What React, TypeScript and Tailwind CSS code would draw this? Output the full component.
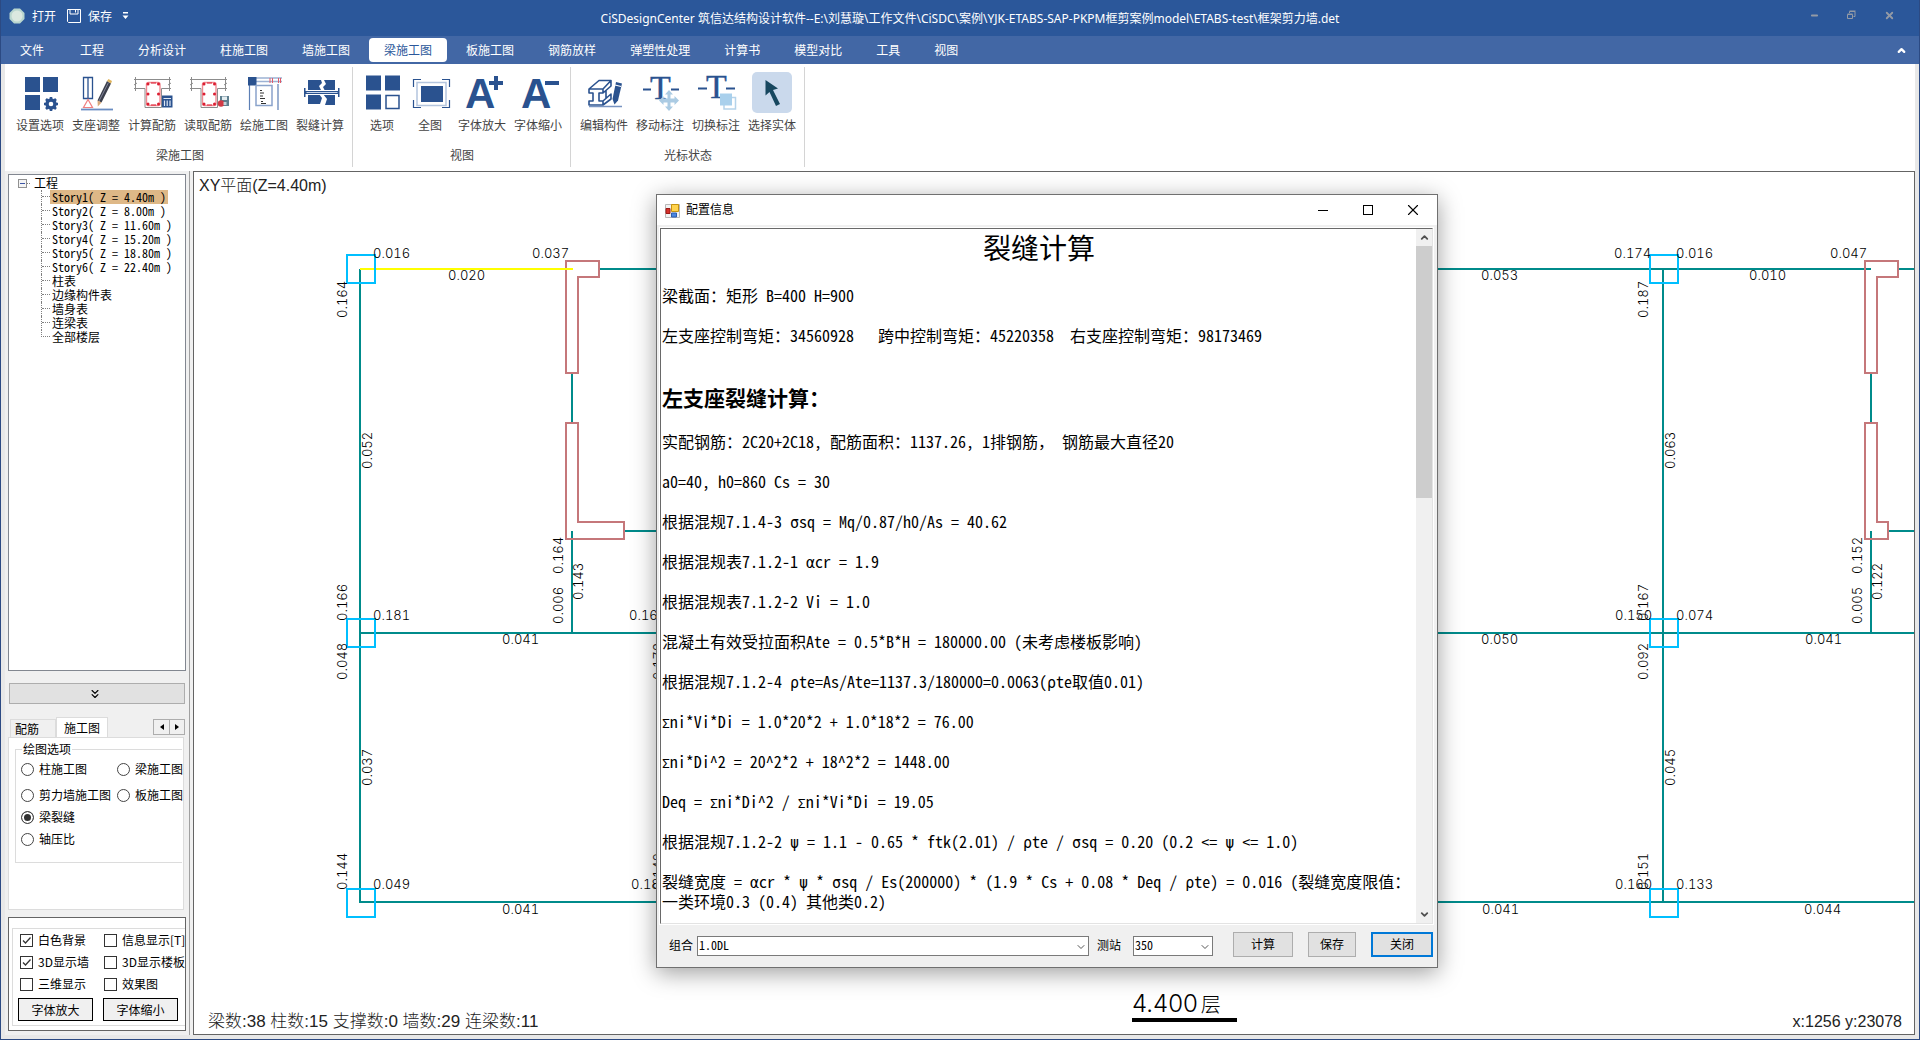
import React from 'react'
import { ChevronDown, ChevronsDown, ChevronUp, Minus, X } from 'lucide-react'

const menus = ['文件', '工程', '分析设计', '柱施工图', '墙施工图', '梁施工图', '板施工图', '钢筋放样', '弹塑性处理', '计算书', '模型对比', '工具', '视图']

const stories = ['Story1( Z = 4.40m )', 'Story2( Z = 8.00m )', 'Story3( Z = 11.60m )', 'Story4( Z = 15.20m )', 'Story5( Z = 18.80m )', 'Story6( Z = 22.40m )', '柱表', '边缘构件表', '墙身表', '连梁表', '全部楼层']

const BLUE = '#2a528f'

function Icon({ children }: { children: React.ReactNode }) {
  return (
    <svg width="40" height="40" viewBox="0 0 40 40" fill="none" aria-hidden="true" className="overflow-visible">
      {children}
    </svg>
  )
}

function SettingsIcon() {
  return (
    <Icon>
      <path d="M5 5h15v15H5zM23 5h15v15H23zM5 23h15v15H5z" fill={BLUE} />
      <circle cx="31" cy="32" r="4" stroke={BLUE} strokeWidth="3.4" />
      <path d="M31 25v3M31 36v3M24 32h3M35 32h3M26 27l2 2M34 35l2 2M36 27l-2 2M28 35l-2 2" stroke={BLUE} strokeWidth="2.6" />
    </Icon>
  )
}

function SupportIcon() {
  return (
    <Icon>
      <path d="M7.500 5.500h9v21h-9zM12 5.500v21" stroke={BLUE} strokeWidth="1.300" />
      <path d="M12 27.500l-4.500 8h9z" stroke="#f08080" strokeWidth="1.200" />
      <path d="M5 37.500h32" stroke="#6a8dc2" strokeWidth="1.800" />
      <path d="M31 9l4 2.500-9.500 19-4-2z" fill="#3b3f4c" />
      <path d="M32.500 10.500l-9.500 18.500" stroke="#80849a" strokeWidth="1" />
      <path d="M31 9l1.500-2 3.500 2-1 2.500z" fill="#e0b45c" />
      <path d="M21.500 28.500l4 2-3.700 4z" fill="#d9a878" />
    </Icon>
  )
}

function SectionBase() {
  return (
    <>
      <path d="M2 7.500h37M2 16.500h11v19h16.500v-19H39M3.500 5v14M37.500 5v14" stroke="#8c8c8c" strokeWidth="1" />
      <path d="M2 13l3-2M36 13l3-2" stroke="#8c8c8c" strokeWidth="1" />
      <rect x="14.500" y="10.500" width="13.500" height="23" rx="2" stroke="#f08a92" strokeWidth="1.400" />
      {[12, 22, 32].map((y) => (
        <React.Fragment key={y}>
          <circle cx="16" cy={y} r="1.500" fill="#dc1e32" />
          <circle cx="26.500" cy={y} r="1.500" fill="#dc1e32" />
        </React.Fragment>
      ))}
      <path d="M19 11h5M19 33h5" stroke="#dc1e32" strokeWidth="1" />
    </>
  )
}

function CalcRebarIcon() {
  return (
    <Icon>
      <SectionBase />
      <path d="M30 23.500h10.500v12H30z" fill={BLUE} />
      <path d="M31.500 26.500h7.500M32.500 28.500v5.500M35.200 28.500v5.500M38 28.500v5.500" stroke="#dfe8f5" strokeWidth="1.200" />
    </Icon>
  )
}

function ReadRebarIcon() {
  return (
    <Icon>
      <SectionBase />
      <path d="M32 24h9v10h-9z" fill="#5f7f8f" />
      <path d="M34 24.500h5v3.500h-5z" fill="#e4edf0" />
      <circle cx="33" cy="31.500" r="3.200" fill="#d23a45" />
      <path d="M35.500 30h3v3h-3z" fill="#c8d4da" />
    </Icon>
  )
}

function DrawPlanIcon() {
  return (
    <Icon>
      <path d="M12 6h26M12 9.500h26" stroke="#9db2d4" strokeWidth="1.400" />
      <path d="M5.500 12v26M34 12v26" stroke="#5d7fb5" strokeWidth="1.200" />
      <path d="M4 5h8.500v8.500H4z" fill={BLUE} />
      <path d="M26 6v5M28.500 6v5M36.500 6v5M34.500 6v5" stroke="#dd5a6a" strokeWidth="1" />
      <path d="M12 13.500h16v20H12z" stroke="#8aa3cb" strokeWidth="1.500" fill="#fff" />
      <path d="M16 18.500h2M16 21h4M16 24h3M16 26.500h5M17 29.500h2M17 31.500h5" stroke="#333" strokeWidth="1" />
    </Icon>
  )
}

function CrackIcon() {
  return (
    <Icon>
      <path d="M8 8h13l1 3-3 3 2 4-2 4 3 4-2 6H8zM35 8H24l2 4-3 3 2 4-2 3 4 5-2 6h10z" fill={BLUE} />
      <path d="M5 18h34v5H5z" fill="#fff" />
      <path d="M5 19h34v3H5zM4 16h1.500v9H4zM38 16h1.500v9H38z" fill={BLUE} />
      <path d="M6.500 20.500h31" stroke="#c9d7ec" strokeWidth="1" />
    </Icon>
  )
}

function OptionIcon() {
  return (
    <Icon>
      <path d="M4 3.500h15v15H4zM23 3.500h15v15H23zM4 22.500h15v15H4z" fill={BLUE} />
      <path d="M24 23.500h13v13H24z" stroke={BLUE} strokeWidth="1.500" />
    </Icon>
  )
}

function FullViewIcon() {
  return (
    <Icon>
      <path d="M3.500 15V7.500H11M32 7.500h7.500V15M39.500 28v7.500H32M11 35.500H3.500V28" stroke={BLUE} strokeWidth="1.200" />
      <path d="M7 10.500h29v23H7z" stroke="#b4c5de" strokeWidth="1.500" />
      <path d="M11 14h22v16H11z" fill={BLUE} />
    </Icon>
  )
}

function FontIcon({ plus }: { plus?: boolean }) {
  return (
    <Icon>
      <text x="3" y="36" fontSize="42" fontWeight="700" fill={BLUE} fontFamily="Liberation Sans, sans-serif">A</text>
      <path d={plus ? 'M27 9h5V4h4v5h5v4h-5v5h-4v-5h-5z' : 'M27 9h14v4H27z'} fill={BLUE} />
    </Icon>
  )
}

function EditMemberIcon() {
  return (
    <Icon>
      <path d="M5 17h14v4h-4v8h4v4H5v-4h4v-8H5zM5 17L15 8.500h12L19 17M19 21l8-7V8.500M19 29l8-7v5l-8 6M15 29l0-8M22 18.500v8" stroke={BLUE} strokeWidth="1.600" strokeLinejoin="round" />
      <path d="M5 34.500h33" stroke="#7894c1" strokeWidth="1.600" />
      <path d="M32 10l6 1.500-4 17-3.500 4-2-5.500z" fill={BLUE} />
      <path d="M31 13l6 1.500" stroke="#fff" strokeWidth="1.200" />
    </Icon>
  )
}

function MoveLabelIcon() {
  return (
    <Icon>
      <text x="10" y="27" fontSize="34" fill={BLUE} stroke={BLUE} strokeWidth=".4" fontFamily="Liberation Serif, serif">T</text>
      <path d="M3 17.500h8M31 17.500h8" stroke={BLUE} strokeWidth="2" />
      <path d="M29 18l4 4.500h-2.500v4h4V24l4.500 4.500-4.500 4.500v-2.500h-4v4H33L29 39l-4-4.500h2.500v-4h-4V33L19 28.500l4.500-4.500v2.500h4v-4H25z" fill="#abcbe3" />
    </Icon>
  )
}

function SwitchLabelIcon() {
  return (
    <Icon>
      <text x="10" y="26" fontSize="34" fill={BLUE} stroke={BLUE} strokeWidth=".4" fontFamily="Liberation Serif, serif">T</text>
      <path d="M2 16.500h9M30 16.500h9" stroke={BLUE} strokeWidth="2" />
      <path d="M28 25.500h11.500v11.500H28z" fill="#fff" stroke="#b5d3ea" strokeWidth="1.500" />
      <path d="M24 21.500h12v12H24z" fill="#a9d0ec" />
    </Icon>
  )
}

function SelectIcon() {
  return (
    <Icon>
      <path d="M13.500 8L26 16.500l-5 1.500 7 14-4 2-6.500-14-4 3.500z" fill="#17475f" />
    </Icon>
  )
}

const ribbon = [
  {
    title: '梁施工图',
    pad: 'pl-[7px]',
    items: [
      { label: '设置选项', icon: <SettingsIcon /> },
      { label: '支座调整', icon: <SupportIcon /> },
      { label: '计算配筋', icon: <CalcRebarIcon /> },
      { label: '读取配筋', icon: <ReadRebarIcon /> },
      { label: '绘施工图', icon: <DrawPlanIcon /> },
      { label: '裂缝计算', icon: <CrackIcon /> },
    ],
  },
  {
    title: '视图',
    pad: 'pl-[5px]',
    items: [
      { label: '选项', icon: <OptionIcon /> },
      { label: '全图', icon: <FullViewIcon /> },
      { label: '字体放大', icon: <FontIcon plus /> },
      { label: '字体缩小', icon: <FontIcon /> },
    ],
  },
  {
    title: '光标状态',
    pad: 'pl-[5px]',
    items: [
      { label: '编辑构件', icon: <EditMemberIcon /> },
      { label: '移动标注', icon: <MoveLabelIcon /> },
      { label: '切换标注', icon: <SwitchLabelIcon /> },
      { label: '选择实体', icon: <SelectIcon />, active: true },
    ],
  },
]

function Header() {
  return (
    <header className="shrink-0 text-xs text-white">
      <div className="grid h-9 grid-cols-[1fr_auto_1fr] bg-[#2b579a]">
        <div className="flex h-8 items-center pl-2">
          <button className="flex items-center gap-[7px]">
            <svg width="16" height="16" viewBox="0 0 16 16" aria-hidden="true">
              <path d="M5 .500h6l4.500 4.500v6L11 15.500H5L.500 11V5z" fill="#b9d6cf" />
              <circle cx="8" cy="8" r="5.500" fill="#dbe8e0" />
            </svg>
            打开
          </button>
          <button className="ml-[10px] flex items-center gap-[6px]">
            <svg width="16" height="16" viewBox="0 0 16 16" fill="none" stroke="#fff" aria-hidden="true">
              <path d="M1.500 1.500h13v13h-12l-1-1zM4 2v4h8V2M9.500 2v2.500" />
            </svg>
            保存
          </button>
          <button className="ml-[10px]" aria-label="自定义">
            <svg width="7" height="8" viewBox="0 0 7 8" fill="#fff" aria-hidden="true">
              <path d="M1 0h5v1.500H1zM.500 3.500h6l-3 3.500z" />
            </svg>
          </button>
        </div>
        <h1 className="pt-px pl-5 font-['Noto_Sans','Noto_Sans_CJK_SC',sans-serif] leading-9 whitespace-nowrap">
          CiSDesignCenter 筑信达结构设计软件--E:\刘慧璇\工作文件\CiSDC\案例\YJK-ETABS-SAP-PKPM框剪案例model\ETABS-test\框架剪力墙.det
        </h1>
        <div className="flex h-[30px] items-center justify-end gap-7 pr-6 text-[#939aa5]">
          <button aria-label="最小化"><Minus size={9} strokeWidth={5} /></button>
          <button aria-label="还原">
            <svg width="9" height="10" viewBox="0 0 9 10" fill="none" stroke="currentColor" aria-hidden="true">
              <path d="M.500 4.500h5v4h-5zM.500 4h5M2.500 3V1.500h5.500v5H6.500M2.500 1h6" />
            </svg>
          </button>
          <button aria-label="关闭程序"><X size={11} strokeWidth={4} /></button>
        </div>
      </div>
      <nav className="flex h-7 items-center gap-1 bg-[#4267a5] pl-1">
        {menus.map((m) => (
          <button
            key={m}
            className={m === '梁施工图' ? 'h-6 rounded-[4px] bg-white px-[15px] text-[#2b579a]' : 'h-6 px-[15px] first:mr-[2px]'}
          >
            {m}
          </button>
        ))}
        <button aria-label="折叠功能区" className="mr-3 ml-auto"><ChevronUp size={11} strokeWidth={5} /></button>
      </nav>
    </header>
  )
}

function Ribbon() {
  return (
    <div className="flex h-[107px] shrink-0 bg-white pt-[3px] pb-1 text-xs text-[#444]">
      {ribbon.map((g) => (
        <section key={g.title} className={`flex flex-col border-r border-[#d4d4d4] pr-1 ${g.pad}`}>
          <div className="flex pt-[5px]">
            {g.items.map((it) => (
              <button key={it.label} className={`flex flex-col items-center whitespace-nowrap ${it.label.length > 2 ? 'w-14' : 'w-12'}`}>
                <span className={it.active ? 'h-[41px] w-10 rounded-[5px] bg-[#cad9ec]' : 'h-[41px] w-10'}>{it.icon}</span>
                <span className="mt-1 leading-4">{it.label}</span>
              </button>
            ))}
          </div>
          <h2 className="mt-[14px] text-center leading-4">{g.title}</h2>
        </section>
      ))}
    </div>
  )
}

function StoryTree() {
  return (
    <div className="min-h-0 flex-1 overflow-hidden border border-[#828790] bg-white pt-px pl-[9px] font-['Noto_Sans_Mono_CJK_SC','Noto_Sans_CJK_SC',monospace] text-xs text-black">
      <div className="flex h-[14px] items-center">
        <button aria-label="折叠" className="flex size-[9px] items-center justify-center border border-[#919191] bg-[#f4f4f4]">
          <span className="h-px w-[5px] bg-[#3c55a5]" />
        </button>
        <span className="w-[3px] border-t border-dotted border-[#808080]" />
        <span className="ml-1 leading-[14px]">工程</span>
      </div>
      <ul className="ml-[23px]">
        {stories.map((s, i) => (
          <li key={s} className="flex h-[14px]">
            <span className={i === stories.length - 1 ? 'h-[7px] w-[9px] border-b border-l border-dotted border-[#808080]' : 'w-[9px] border-l border-dotted border-[#808080]'}>
              {i < stories.length - 1 && <span className="block h-[7px] border-b border-dotted border-[#808080]" />}
            </span>
            <a href="#" className={i === 0 ? 'bg-[#deb887] px-[2px] leading-[14px] whitespace-pre' : 'px-[2px] leading-[14px] whitespace-pre'}>{s}</a>
          </li>
        ))}
      </ul>
    </div>
  )
}

function Radio({ label, checked }: { label: string; checked?: boolean }) {
  return (
    <label className="flex items-center gap-[5px] whitespace-nowrap">
      <input
        type="radio"
        name="drawing"
        defaultChecked={checked}
        className="size-[13px] shrink-0 appearance-none rounded-full border border-[#444] bg-white checked:bg-[#333] checked:shadow-[inset_0_0_0_2px_white]"
      />
      {label}
    </label>
  )
}

function Check({ label, checked }: { label: string; checked?: boolean }) {
  return (
    <label className="flex items-center gap-[5px] whitespace-nowrap">
      <span className="relative flex shrink-0">
        <input type="checkbox" defaultChecked={checked} className="peer size-[13px] appearance-none border border-[#333] bg-white" />
        <svg width="13" height="13" viewBox="0 0 13 13" fill="none" stroke="#333" strokeWidth="1.300" aria-hidden="true" className="pointer-events-none absolute inset-0 hidden peer-checked:block">
          <path d="M3 6.500L5.500 9l5-5.500" />
        </svg>
      </span>
      {label}
    </label>
  )
}

function Sidebar() {
  return (
    <aside className="flex w-[185px] shrink-0 flex-col border-r border-[#a0a0a0] px-[3px] pt-[3px] pb-1 text-xs text-black">
      <StoryTree />
      <button aria-label="展开" className="mx-px mt-3 flex h-[21px] shrink-0 items-center justify-center border border-[#adadad] bg-[#e1e1e1] pr-1">
        <ChevronsDown size={14} strokeWidth={2} />
      </button>
      <div className="mt-[13px] flex h-5 shrink-0 items-end pl-[2px]">
        <button className="h-[18px] w-[46px] border border-b-0 border-[#dcdcdc] bg-[#f0f0f0] pr-3 leading-[18px]">配筋</button>
        <button className="-mb-px h-[21px] w-[52px] border border-b-0 border-[#dcdcdc] bg-white leading-[18px]">施工图</button>
        <span className="mr-px mb-[2px] ml-auto flex">
          <button aria-label="左移" className="flex h-4 w-[17px] items-center justify-center border border-[#adadad] bg-[#f0f0f0]">
            <svg width="4" height="6" viewBox="0 0 4 6" aria-hidden="true"><path d="M4 0v6L0 3z" /></svg>
          </button>
          <button aria-label="右移" className="-ml-px flex h-4 w-4 items-center justify-center border border-[#adadad] bg-[#f0f0f0]">
            <svg width="4" height="6" viewBox="0 0 4 6" aria-hidden="true"><path d="M0 0v6l4-3z" /></svg>
          </button>
        </span>
      </div>
      <div className="mr-[2px] h-[173px] shrink-0 overflow-hidden border border-[#dcdcdc] bg-white pt-1 pr-px pl-[6px]">
        <fieldset className="w-full min-w-0 border border-r-0 border-[#dcdcdc] pb-[10px] pl-[5px]">
          <legend className="ml-px px-px leading-[14px]">绘图选项</legend>
          <div className="grid grid-cols-[96px_1fr] grid-rows-[26px_26px_18px_26px]">
            <Radio label="柱施工图" />
            <Radio label="梁施工图" />
            <Radio label="剪力墙施工图" />
            <Radio label="板施工图" />
            <Radio label="梁裂缝" checked />
            <span />
            <Radio label="轴压比" />
          </div>
        </fieldset>
      </div>
      <div className="mt-[7px] shrink-0 overflow-hidden border border-[#646464] bg-white pt-[10px] pb-1 pl-[3px]">
        <div className="border border-r-0 border-[#dcdcdc] pb-1 pl-[7px]">
          <div className="grid grid-cols-[84px_1fr] grid-rows-[22px_22px_22px]">
            <Check label="白色背景" checked />
            <Check label="信息显示[T]" />
            <Check label="3D显示墙" checked />
            <Check label="3D显示楼板" />
            <Check label="三维显示" />
            <Check label="效果图" />
          </div>
          <div className="-ml-[2px] flex gap-[10px] pt-[3px]">
            <button className="h-[23px] w-[75px] border border-black bg-[#f0f0f0] leading-5">字体放大</button>
            <button className="h-[23px] w-[75px] border border-black bg-[#f0f0f0] leading-5">字体缩小</button>
          </div>
        </div>
      </div>
    </aside>
  )
}

// beams as x1, y1, x2, y2
const beams = [
  [405, 97, 1677, 97],
  [1704, 97, 1720, 97],
  [166, 97, 166, 731],
  [166, 461, 1720, 461],
  [166, 730, 1720, 730],
  [378, 201, 378, 251],
  [378, 359, 378, 461],
  [430, 359, 1200, 359],
  [1469, 97, 1469, 730],
  [1677, 201, 1677, 251],
  [1677, 359, 1677, 461],
  [1694, 359, 1720, 359],
]

const columns = [[153, 83], [153, 447], [153, 717], [1456, 83], [1456, 447], [1456, 717]]

// crack widths along horizontal beams
const hLabels: [number, number, string][] = [
  [179, 86, '0.016'], [338, 86, '0.037'], [254, 108, '0.020'],
  [179, 448, '0.181'], [308, 472, '0.041'], [435, 448, '0.165'],
  [179, 717, '0.049'], [308, 742, '0.041'], [437, 717, '0.182'],
  [1287, 108, '0.053'], [1420, 86, '0.174'], [1482, 86, '0.016'], [1636, 86, '0.047'], [1555, 108, '0.010'],
  [1421, 448, '0.150'], [1482, 448, '0.074'], [1287, 472, '0.050'], [1611, 472, '0.041'],
  [1421, 717, '0.160'], [1482, 717, '0.133'], [1288, 742, '0.041'], [1610, 742, '0.044'],
]

// and along vertical ones, read from the bottom up
const vLabels: [number, number, string][] = [
  [153, 146, '0.164'], [178, 297, '0.052'], [369, 402, '0.164'], [389, 428, '0.143'], [369, 452, '0.006'],
  [153, 449, '0.166'], [153, 508, '0.048'], [469, 508, '0.178'], [178, 614, '0.037'],
  [153, 718, '0.144'], [469, 718, '0.142'],
  [1454, 146, '0.187'], [1481, 297, '0.063'], [1454, 449, '0.167'], [1668, 402, '0.152'], [1688, 428, '0.122'],
  [1668, 452, '0.005'], [1454, 508, '0.092'], [1481, 614, '0.045'], [1454, 718, '0.151'],
]

function PlanDrawing() {
  return (
    <svg className="absolute inset-0 h-full w-full" fill="none" aria-label="XY平面">
      <g stroke="#008b8b" strokeWidth="2">
        {beams.map(([x1, y1, x2, y2], i) => (
          <path key={i} d={`M${x1} ${y1}L${x2} ${y2}`} />
        ))}
      </g>
      <g stroke="#c5777a" strokeWidth="2">
        <path d="M372 89h33v16h-21v96h-12z" />
        <path d="M372 251h12v99h46v17h-58z" />
        <path d="M1671 89h33v16h-21v96h-12z" />
        <path d="M1671 251h12v99h11v17h-23z" />
      </g>
      <path d="M166 97h213" stroke="#ffff00" strokeWidth="2" />
      <g stroke="#00bfff" strokeWidth="2">
        {columns.map(([x, y]) => (
          <rect key={`${x}-${y}`} x={x} y={y} width="28" height="28" />
        ))}
      </g>
      <g fill="#000" className="font-['Inter',sans-serif] text-[13px] font-light tabular-nums">
        {hLabels.map(([x, y, t], i) => (
          <text key={i} x={x} y={y}>{t}</text>
        ))}
        {vLabels.map(([x, y, t], i) => (
          <text key={i} transform={`translate(${x} ${y}) rotate(-90)`}>{t}</text>
        ))}
      </g>
      <text x="938" y="840" fill="#000" className="font-['Inter','Noto_Sans_CJK_SC',sans-serif] text-[24px] font-light">
        4.400<tspan className="text-[20px]" dx="3">层</tspan>
      </text>
      <path d="M938 848h105" stroke="#000" strokeWidth="4" />
    </svg>
  )
}

// Greek letters come from a narrow face, the CJK one draws them full width
function Formula({ text }: { text: string }) {
  return (
    <>
      {text.split(/([α-ωΑ-Ω])/).map((part, i) =>
        i % 2 ? (
          <span key={i} className={`font-['DejaVu_Sans_Mono',monospace] leading-none ${part === 'Σ' ? 'text-[13px]' : 'text-[15px]'}`}>{part}</span>
        ) : (
          part
        ),
      )}
    </>
  )
}

const steps = [
  '实配钢筋：2C20+2C18, 配筋面积：1137.26, 1排钢筋， 钢筋最大直径20',
  'a0=40, h0=860 Cs = 30',
  '根据混规7.1.4-3 σsq = Mq/0.87/h0/As = 40.62',
  '根据混规表7.1.2-1 αcr = 1.9',
  '根据混规表7.1.2-2 Vi = 1.0',
  '混凝土有效受拉面积Ate = 0.5*B*H = 180000.00 (未考虑楼板影响)',
  '根据混规7.1.2-4 ρte=As/Ate=1137.3/180000=0.0063(ρte取值0.01)',
  'Σni*Vi*Di = 1.0*20*2 + 1.0*18*2 = 76.00',
  'Σni*Di^2 = 20^2*2 + 18^2*2 = 1448.00',
  'Deq = Σni*Di^2 / Σni*Vi*Di = 19.05',
  '根据混规7.1.2-2 ψ = 1.1 - 0.65 * ftk(2.01) / ρte / σsq = 0.20 (0.2 <= ψ <= 1.0)',
  '裂缝宽度 = αcr * ψ * σsq / Es(200000) * (1.9 * Cs + 0.08 * Deq / ρte) = 0.016 (裂缝宽度限值：\n一类环境0.3 (0.4) 其他类0.2)',
]

function Combo({ id, value, width }: { id: string; value: string; width: string }) {
  return (
    <span className={`relative flex ${width}`}>
      <select id={id} className="h-5 w-full appearance-none border border-[#7a7a7a] bg-white pb-[2px] pl-px font-['Noto_Sans_Mono_CJK_SC',monospace] text-xs leading-4">
        <option>{value}</option>
      </select>
      <ChevronDown size={12} strokeWidth={2} className="pointer-events-none absolute top-[5px] right-[2px] text-[#555]" />
    </span>
  )
}

function CrackDialog() {
  return (
    <div role="dialog" aria-label="配置信息" className="absolute top-[22px] left-[462px] w-[782px] border border-[#707070] bg-[#f0f0f0] text-black shadow-[0_5px_22px_rgba(0,0,0,0.38)]">
      <div className="flex h-[30px] items-center bg-white pl-2 text-xs">
        <svg width="15" height="15" viewBox="0 0 15 15" aria-hidden="true">
          <path d="M.500 1.500h14v13H.500z" fill="#f2f2f2" stroke="#b8b8b8" />
          <path d="M6.500 1.500h7v7h-7z" fill="#ffd34d" stroke="#c79410" />
          <path d="M1 5.500h4v5H1z" fill="#d6312b" stroke="#9c1b17" />
          <path d="M6.500 10h5v4h-5z" fill="#4a86e0" stroke="#2c5db0" />
        </svg>
        <span className="ml-[6px]">配置信息</span>
        <span className="ml-auto flex pr-px">
          <button aria-label="最小化窗口" className="flex w-[45px] items-center justify-center"><span className="h-px w-[10px] bg-black" /></button>
          <button aria-label="最大化窗口" className="flex w-[45px] items-center justify-center"><span className="size-[10px] border border-black" /></button>
          <button aria-label="关闭窗口" className="flex w-[46px] justify-center"><X size={18} strokeWidth={1.5} /></button>
        </span>
      </div>
      <div className="mt-[3px] mr-1 ml-[3px] flex h-[696px] border border-t-[#696969] border-r-[#e3e3e3] border-b-[#e3e3e3] border-l-[#696969] bg-white shadow-[0_0_0_1px_#fff,-1px_-1px_0_#a0a0a0]">
        <div className="min-w-0 flex-1 pl-px font-['Noto_Sans_Mono_CJK_SC','Noto_Sans_CJK_SC',monospace] text-base leading-5 whitespace-pre">
          <h2 className="text-center text-[28px] leading-9 font-medium">裂缝计算</h2>
          <p className="mt-5">梁截面：矩形 B=400 H=900</p>
          <p className="mt-5">左支座控制弯矩：34560928{'   '}跨中控制弯矩：45220358{'  '}右支座控制弯矩：98173469</p>
          <h3 className="mt-[38px] text-[21px] leading-[28px] font-bold">左支座裂缝计算：</h3>
          <div className="mt-5 flex flex-col gap-5">
            {steps.map((s) => (
              <p key={s}><Formula text={s} /></p>
            ))}
          </div>
        </div>
        <div className="flex w-4 shrink-0 flex-col items-center bg-[#f0f0f0] text-[#505050]">
          <ChevronUp size={11} strokeWidth={4} className="my-[3px]" />
          <div className="h-[252px] w-full bg-[#cdcdcd]" />
          <ChevronDown size={11} strokeWidth={4} className="mt-auto mb-[3px]" />
        </div>
      </div>
      <div className="flex h-[43px] items-center pr-1 pl-3 text-xs">
        <label htmlFor="combo" className="mr-1">组合</label>
        <Combo id="combo" value="1.0DL" width="w-[392px]" />
        <label htmlFor="station" className="mr-3 ml-2">测站</label>
        <Combo id="station" value="350" width="w-20" />
        <button className="mb-[2px] ml-auto h-[25px] w-[60px] border border-[#adadad] bg-[#e1e1e1]">计算</button>
        <button className="mb-[2px] ml-[15px] h-[25px] w-12 border border-[#adadad] bg-[#e1e1e1]">保存</button>
        <button className="mb-[2px] ml-[15px] h-[25px] w-[62px] border-2 border-[#0078d7] bg-[#e1e1e1]">关闭</button>
      </div>
    </div>
  )
}

export default function App() {
  return (
    <div className="flex h-screen min-h-[800px] flex-col overflow-hidden border-x border-b border-[#2c4a83] bg-[#e8e8e8] font-['Noto_Sans_CJK_SC',sans-serif]">
      <Header />
      <div className="mx-1 mb-1 flex min-h-0 flex-1 flex-col bg-[#f0f0f0]">
        <Ribbon />
        <div className="flex min-h-0 flex-1">
          <Sidebar />
          <main className="relative ml-[3px] flex min-w-0 flex-1 flex-col justify-between overflow-hidden border border-[#646464] bg-white font-['Liberation_Sans','Noto_Sans_CJK_SC',sans-serif] text-base text-[#222]">
            <PlanDrawing />
            <p className="relative pt-[2px] pl-[5px] font-light">XY平面(Z=4.40m)</p>
            <div className="relative flex items-end justify-between pr-3 pl-[14px] font-light">
              <p className="text-[17px]">梁数:38 柱数:15 支撑数:0 墙数:29 连梁数:11</p>
              <p>x:1256 y:23078</p>
            </div>
            <CrackDialog />
          </main>
        </div>
      </div>
    </div>
  )
}
